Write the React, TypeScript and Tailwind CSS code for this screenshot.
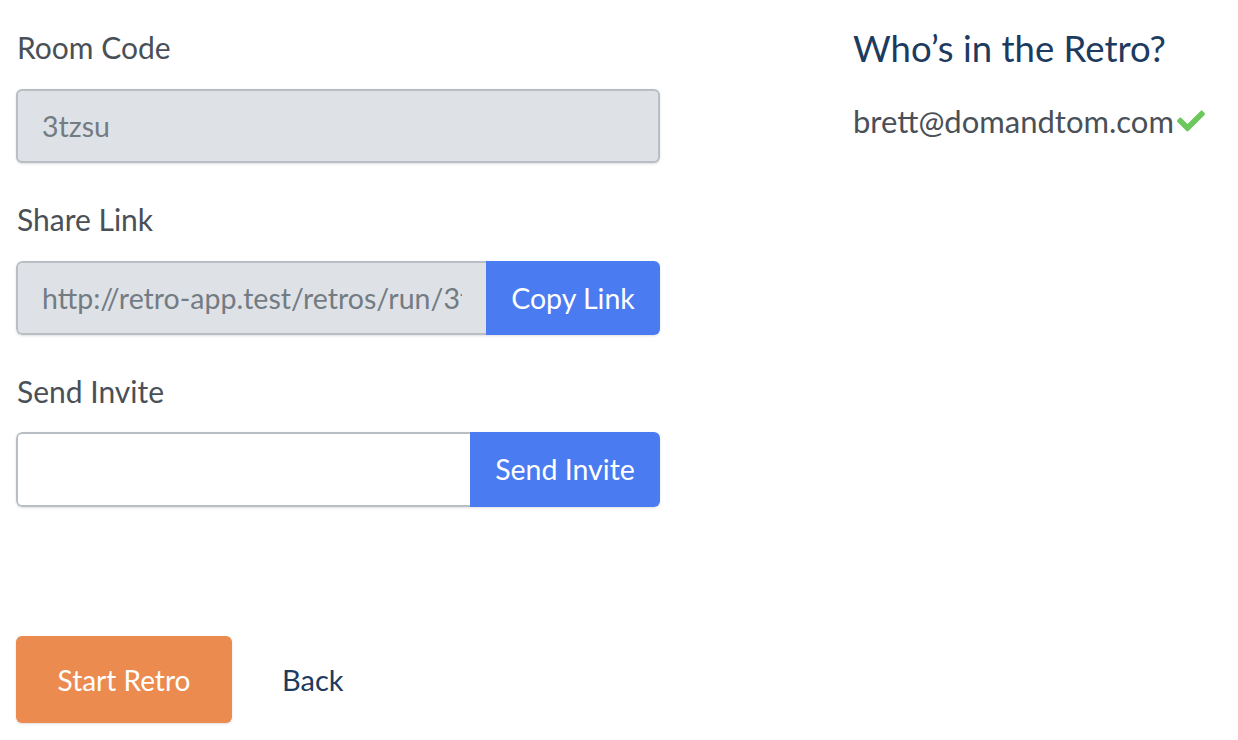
import { FaCheck } from "react-icons/fa";

const font = { fontFamily: "Lato, 'Open Sans', sans-serif" };

function Label({ children }: { children: React.ReactNode }) {
  return <div className="h-[36px] text-[30px] leading-[36px] text-[#495057]">{children}</div>;
}

export default function App() {
  return (
    <div className="flex h-[740px] w-[1238px] bg-white" style={font}>
      <div className="w-[660px] pl-[16px] pt-[29px]">
        <div className="pl-[1px]">
          <Label>Room Code</Label>
        </div>
        <div className="mt-[24px] flex h-[74px] items-center rounded-[6px] border-2 border-[#b8bec4] bg-[#dee2e6] px-[24px] text-[28.5px] text-[#737b83] shadow-sm">
          3tzsu
        </div>

        <div className="mt-[38px] pl-[1px]">
          <Label>Share Link</Label>
        </div>
        <div className="mt-[24px] flex h-[74px] overflow-hidden rounded-[6px] shadow-sm">
          <input
            readOnly
            value="http://retro-app.test/retros/run/3tzsu"
            className="min-w-0 flex-1 rounded-l-[6px] border-2 border-r-0 border-[#b8bec4] bg-[#dee2e6] px-[24px] text-[28.5px] text-[#737b83] outline-none"
          />
          <button className="w-[174px] shrink-0 bg-[#4a7bf0] text-[28.5px] text-white">Copy Link</button>
        </div>

        <div className="mt-[38px] pl-[1px]">
          <Label>Send Invite</Label>
        </div>
        <div className="mt-[23px] flex h-[75px] overflow-hidden rounded-[6px] shadow-sm">
          <input className="min-w-0 flex-1 rounded-l-[6px] border-2 border-r-0 border-[#b8bec4] bg-white px-[24px] text-[28.5px] outline-none" />
          <button className="w-[190px] shrink-0 bg-[#4a7bf0] text-[28.5px] text-white">Send Invite</button>
        </div>

        <div className="mt-[129px] flex items-center">
          <button className="h-[87px] w-[216px] rounded-[6px] bg-[#eb8b50] text-[28px] text-white shadow-sm">
            Start Retro
          </button>
          <span className="ml-[50px] text-[29px] text-[#1d3a5f]">Back</span>
        </div>
      </div>

      <div className="pl-[193px] pt-[26px]">
        <h2 className="text-[36.5px] leading-[44px] text-[#1d3a5f]">Who’s in the Retro?</h2>
        <div className="mt-[28px] flex items-center text-[31px] text-[#495057]">
          brett@domandtom.com
          <FaCheck className="ml-[3px] text-[28px] text-[#6cc85c]" />
        </div>
      </div>
    </div>
  );
}
